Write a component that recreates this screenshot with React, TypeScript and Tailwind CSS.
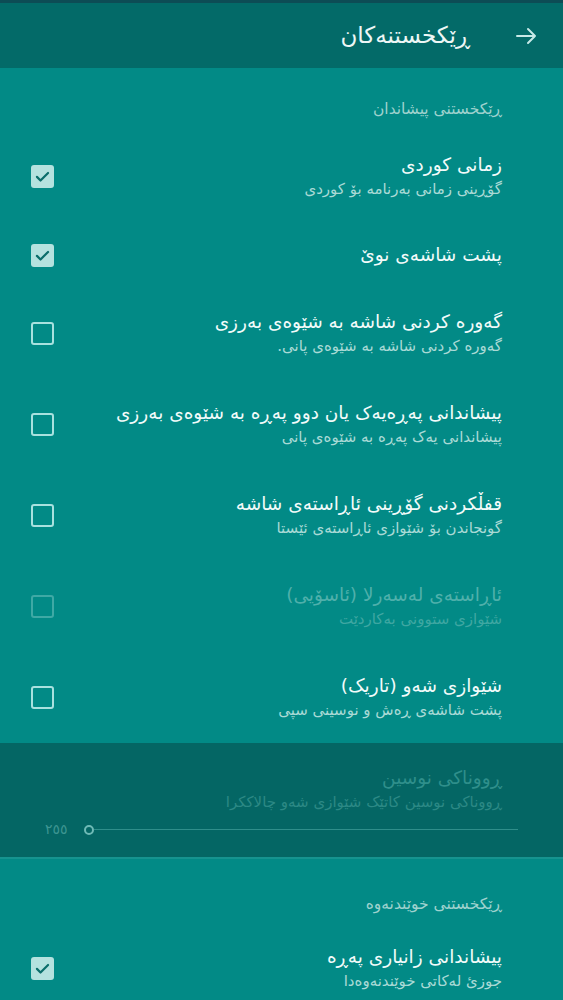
import React from 'react';

type Pref = {
  title: string;
  subtitle?: string;
  checked: boolean;
  disabled?: boolean;
};

const DISPLAY_PREFS: Pref[] = [
  { title: 'زمانی کوردی', subtitle: 'گۆڕینی زمانی بەرنامە بۆ کوردی', checked: true },
  { title: 'پشت شاشەی نوێ', checked: true },
  { title: 'گەورە کردنی شاشە بە شێوەی بەرزی', subtitle: 'گەورە کردنی شاشە بە شێوەی پانی.', checked: false },
  { title: 'پیشاندانی پەڕەیەک یان دوو پەڕە بە شێوەی بەرزی', subtitle: 'پیشاندانی یەک پەڕە بە شێوەی پانی', checked: false },
  { title: 'قفڵکردنی گۆڕینی ئاڕاستەی شاشە', subtitle: 'گونجاندن بۆ شێوازی ئاڕاستەی ئێستا', checked: false },
  { title: 'ئاڕاستەی لەسەرلا (ئاسۆیی)', subtitle: 'شێوازی ستوونی بەکاردێت', checked: false, disabled: true },
  { title: 'شێوازی شەو (تاریک)', subtitle: 'پشت شاشەی ڕەش و نوسینی سپی', checked: false },
];

const READING_PREFS: Pref[] = [
  { title: 'پیشاندانی زانیاری پەڕە', subtitle: 'جوزئ لەکاتی خوێندنەوەدا', checked: true },
];

function Checkbox({ checked, disabled }: { checked: boolean; disabled?: boolean }) {
  if (checked) {
    return (
      <span className="flex h-[23px] w-[23px] items-center justify-center rounded-[3px] bg-[#b4e2df]">
        <svg viewBox="0 0 24 24" className="h-[19px] w-[19px]" fill="none" stroke="#0a6e6b" strokeWidth="2.8" strokeLinecap="round" strokeLinejoin="round">
          <path d="M5 12.5l4.5 4.5L19 7.5" />
        </svg>
      </span>
    );
  }
  return (
    <span
      className={`block h-[23px] w-[23px] rounded-[3px] border-[2.5px] ${
        disabled ? 'border-[#3fa9a5]' : 'border-[#a9e1df]'
      }`}
    />
  );
}

function PrefRow({ pref }: { pref: Pref }) {
  const tall = Boolean(pref.subtitle);
  return (
    <div className={`flex items-center justify-between pr-[61px] pl-[31px] ${tall ? 'h-[91px]' : 'h-[66px]'}`}>
      <div className="flex flex-col">
        <span className={`text-[18.5px] leading-[26px] ${pref.disabled ? 'text-[#4fb0ab]' : 'text-[#f2fbfa]'}`}>
          {pref.title}
        </span>
        {pref.subtitle ? (
          <span className={`text-[15px] leading-[23px] ${pref.disabled ? 'text-[#3fa7a2]' : 'text-[#aadad6]'}`}>
            {pref.subtitle}
          </span>
        ) : null}
      </div>
      <Checkbox checked={pref.checked} disabled={pref.disabled} />
    </div>
  );
}

export default function App() {
  return (
    <div
      dir="rtl"
      className="min-h-[1000px] w-[563px] overflow-hidden bg-[#028a86]"
      style={{ fontFamily: '"DejaVu Sans", "Noto Sans", sans-serif' }}
    >
      <header className="flex h-[68px] items-center gap-[44px] border-t-[3px] border-[#0d4c55] bg-[#036a68] pr-[25px]">
        <svg viewBox="0 0 24 24" className="h-[24px] w-[24px]" fill="none" stroke="#c7e9e7" strokeWidth="2" strokeLinecap="round" strokeLinejoin="round">
          <path d="M3 12h18M14 5l7 7-7 7" />
        </svg>
        <h1 className="text-[23px] text-[#eef7f6]">ڕێکخستنەکان</h1>
      </header>

      <section>
        <div className="pt-[30px] pb-[10px] pr-[61px] text-[15.5px] text-[#9fd2ce]">ڕێکخستنی پیشاندان</div>
        {DISPLAY_PREFS.map((pref) => (
          <PrefRow key={pref.title} pref={pref} />
        ))}
      </section>

      <section className="flex h-[116px] flex-col border-b-2 border-[#16938f] bg-[#046664] pt-[22px] pr-[61px] pl-[45px]">
        <span className="text-[18.5px] leading-[26px] text-[#2f8f8b]">ڕووناکی نوسین</span>
        <span className="text-[15px] leading-[23px] text-[#2c8985]">ڕووناکی نوسین کاتێک شێوازی شەو چالاککرا</span>
        <div className="mt-[5px] flex items-center gap-[16px]" dir="ltr">
          <span className="text-[14px] text-[#3d9591]">٢٥٥</span>
          <div className="-mr-[16px] flex flex-1 items-center">
            <span className="h-[10px] w-[10px] rounded-full border-[2.5px] border-[#6fbab6]" />
            <span className="h-px flex-1 bg-[#2f8e8a]" />
          </div>
        </div>
      </section>

      <section>
        <div className="pt-[34px] pb-[6px] pr-[61px] text-[15.5px] text-[#9fd2ce]">ڕێکخستنی خوێندنەوە</div>
        {READING_PREFS.map((pref) => (
          <PrefRow key={pref.title} pref={pref} />
        ))}
      </section>
    </div>
  );
}
